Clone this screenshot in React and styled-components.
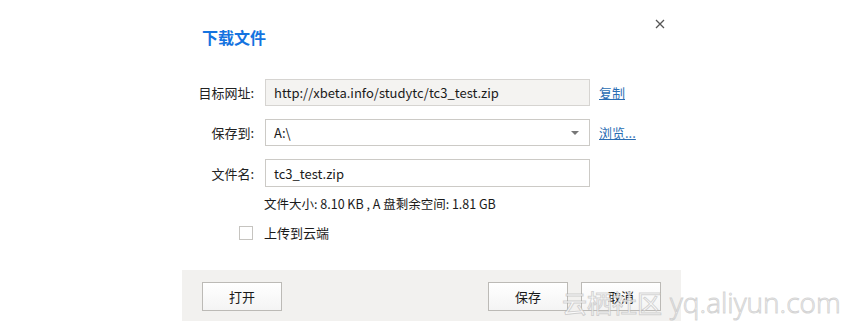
import React from "react";
import styled, { createGlobalStyle } from "styled-components";

const Global = createGlobalStyle`
  html, body { margin: 0; padding: 0; background: #ffffff; }
  body {
    font-family: "Noto Sans CJK SC", "Open Sans", sans-serif;
    font-size: 13px;
    color: #1f1f1f;
    width: 850px;
    height: 333px;
    overflow: hidden;
    position: relative;
  }
`;

const Dialog = styled.div`
  position: relative;
  margin-left: 182px;
  width: 499px;
  background: #ffffff;
  display: flex;
  flex-direction: column;
`;

const Header = styled.div`
  height: 79px;
  padding: 0 20px;
  display: flex;
  align-items: flex-start;
`;

const Title = styled.h1`
  margin: 26px 0 0;
  font-size: 16px;
  line-height: 22px;
  font-weight: 700;
  color: #1473e0;
`;

const Close = styled.button`
  position: absolute;
  top: 15px;
  right: 12px;
  width: 18px;
  height: 18px;
  padding: 0;
  border: 0;
  background: transparent;
  display: flex;
  align-items: center;
  justify-content: center;
`;

const Form = styled.div`
  display: grid;
  grid-template-columns: 72px 325px auto;
  column-gap: 11px;
  row-gap: 13px;
  align-items: center;
`;

const Label = styled.div`
  text-align: right;
  font-size: 13px;
  line-height: 27px;
  color: #222;
`;

const Field = styled.div`
  box-sizing: border-box;
  height: ${(p) => (p.$tall ? 28 : 27)}px;
  border: 1px solid ${(p) => (p.$readonly ? "#d6d4d1" : "#cccac6")};
  background: ${(p) => (p.$readonly ? "#f4f3f1" : "#ffffff")};
  padding: 0 8px;
  display: flex;
  align-items: center;
  justify-content: space-between;
  font-size: 13px;
  color: #1a1a1a;
`;

const Caret = styled.span`
  width: 0;
  height: 0;
  border-left: 4px solid transparent;
  border-right: 4px solid transparent;
  border-top: 4px solid #777;
  margin-right: 2px;
`;

const Link = styled.a`
  margin-left: -2px;
  font-size: 13px;
  color: #2a6db3;
  text-decoration: underline;
  cursor: pointer;
`;

const Info = styled.div`
  margin: 8px 0 0 82px;
  font-size: 12.5px;
  line-height: 18px;
  color: #1a1a1a;
`;

const CheckRow = styled.label`
  margin: 10px 0 0 57px;
  display: flex;
  align-items: center;
  gap: 11px;
  font-size: 13px;
  line-height: 20px;
  color: #1a1a1a;
`;

const Box = styled.span`
  box-sizing: border-box;
  width: 14px;
  height: 14px;
  border: 1px solid #c6c4c0;
  background: #fff;
`;

const Footer = styled.div`
  margin-top: 27px;
  height: 51px;
  background: #f2f1ef;
  padding: 12px 20px 0;
  box-sizing: border-box;
  display: flex;
  align-items: flex-start;
  gap: 13px;
`;

const Button = styled.button`
  box-sizing: border-box;
  width: 80px;
  height: 29px;
  border: 1px solid #bcbab6;
  background: linear-gradient(#ffffff, #f4f4f4);
  font-family: "Noto Sans CJK SC", sans-serif;
  font-size: 13px;
  color: #1a1a1a;
  padding: 0;
  margin-left: ${(p) => (p.$push ? "auto" : "0")};
`;

const Watermark = styled.div`
  position: absolute;
  left: 562px;
  top: 285px;
  display: flex;
  align-items: baseline;
  gap: 8px;
  font-family: "Noto Sans CJK SC", sans-serif;
  font-size: 25px;
  line-height: 34px;
  color: rgba(255, 255, 255, 0.8);
  -webkit-text-stroke: 1px rgba(170, 170, 170, 0.5);
  white-space: nowrap;
  pointer-events: none;
`;

const Latin = styled.span`
  font-family: "Open Sans", sans-serif;
  font-weight: 300;
  font-size: 28px;
`;

export default function App() {
  return (
    <>
      <Global />
      <Dialog>
        <Header>
          <Title>下载文件</Title>
          <Close aria-label="close">
            <svg width="10" height="10" viewBox="0 0 10 10">
              <path d="M1 1L9 9M9 1L1 9" stroke="#555" strokeWidth="1.3" />
            </svg>
          </Close>
        </Header>
        <Form>
          <Label>目标网址:</Label>
          <Field $readonly>http://xbeta.info/studytc/tc3_test.zip</Field>
          <Link>复制</Link>

          <Label>保存到:</Label>
          <Field>
            <span>A:\</span>
            <Caret />
          </Field>
          <Link>浏览...</Link>

          <Label>文件名:</Label>
          <Field $tall>tc3_test.zip</Field>
          <span />
        </Form>
        <Info>文件大小: 8.10 KB , A 盘剩余空间: 1.81 GB</Info>
        <CheckRow>
          <Box />
          上传到云端
        </CheckRow>
        <Footer>
          <Button>打开</Button>
          <Button $push>保存</Button>
          <Button>取消</Button>
        </Footer>
      </Dialog>
      <Watermark>
        <span>云栖社区</span>
        <Latin>yq.aliyun.com</Latin>
      </Watermark>
    </>
  );
}
